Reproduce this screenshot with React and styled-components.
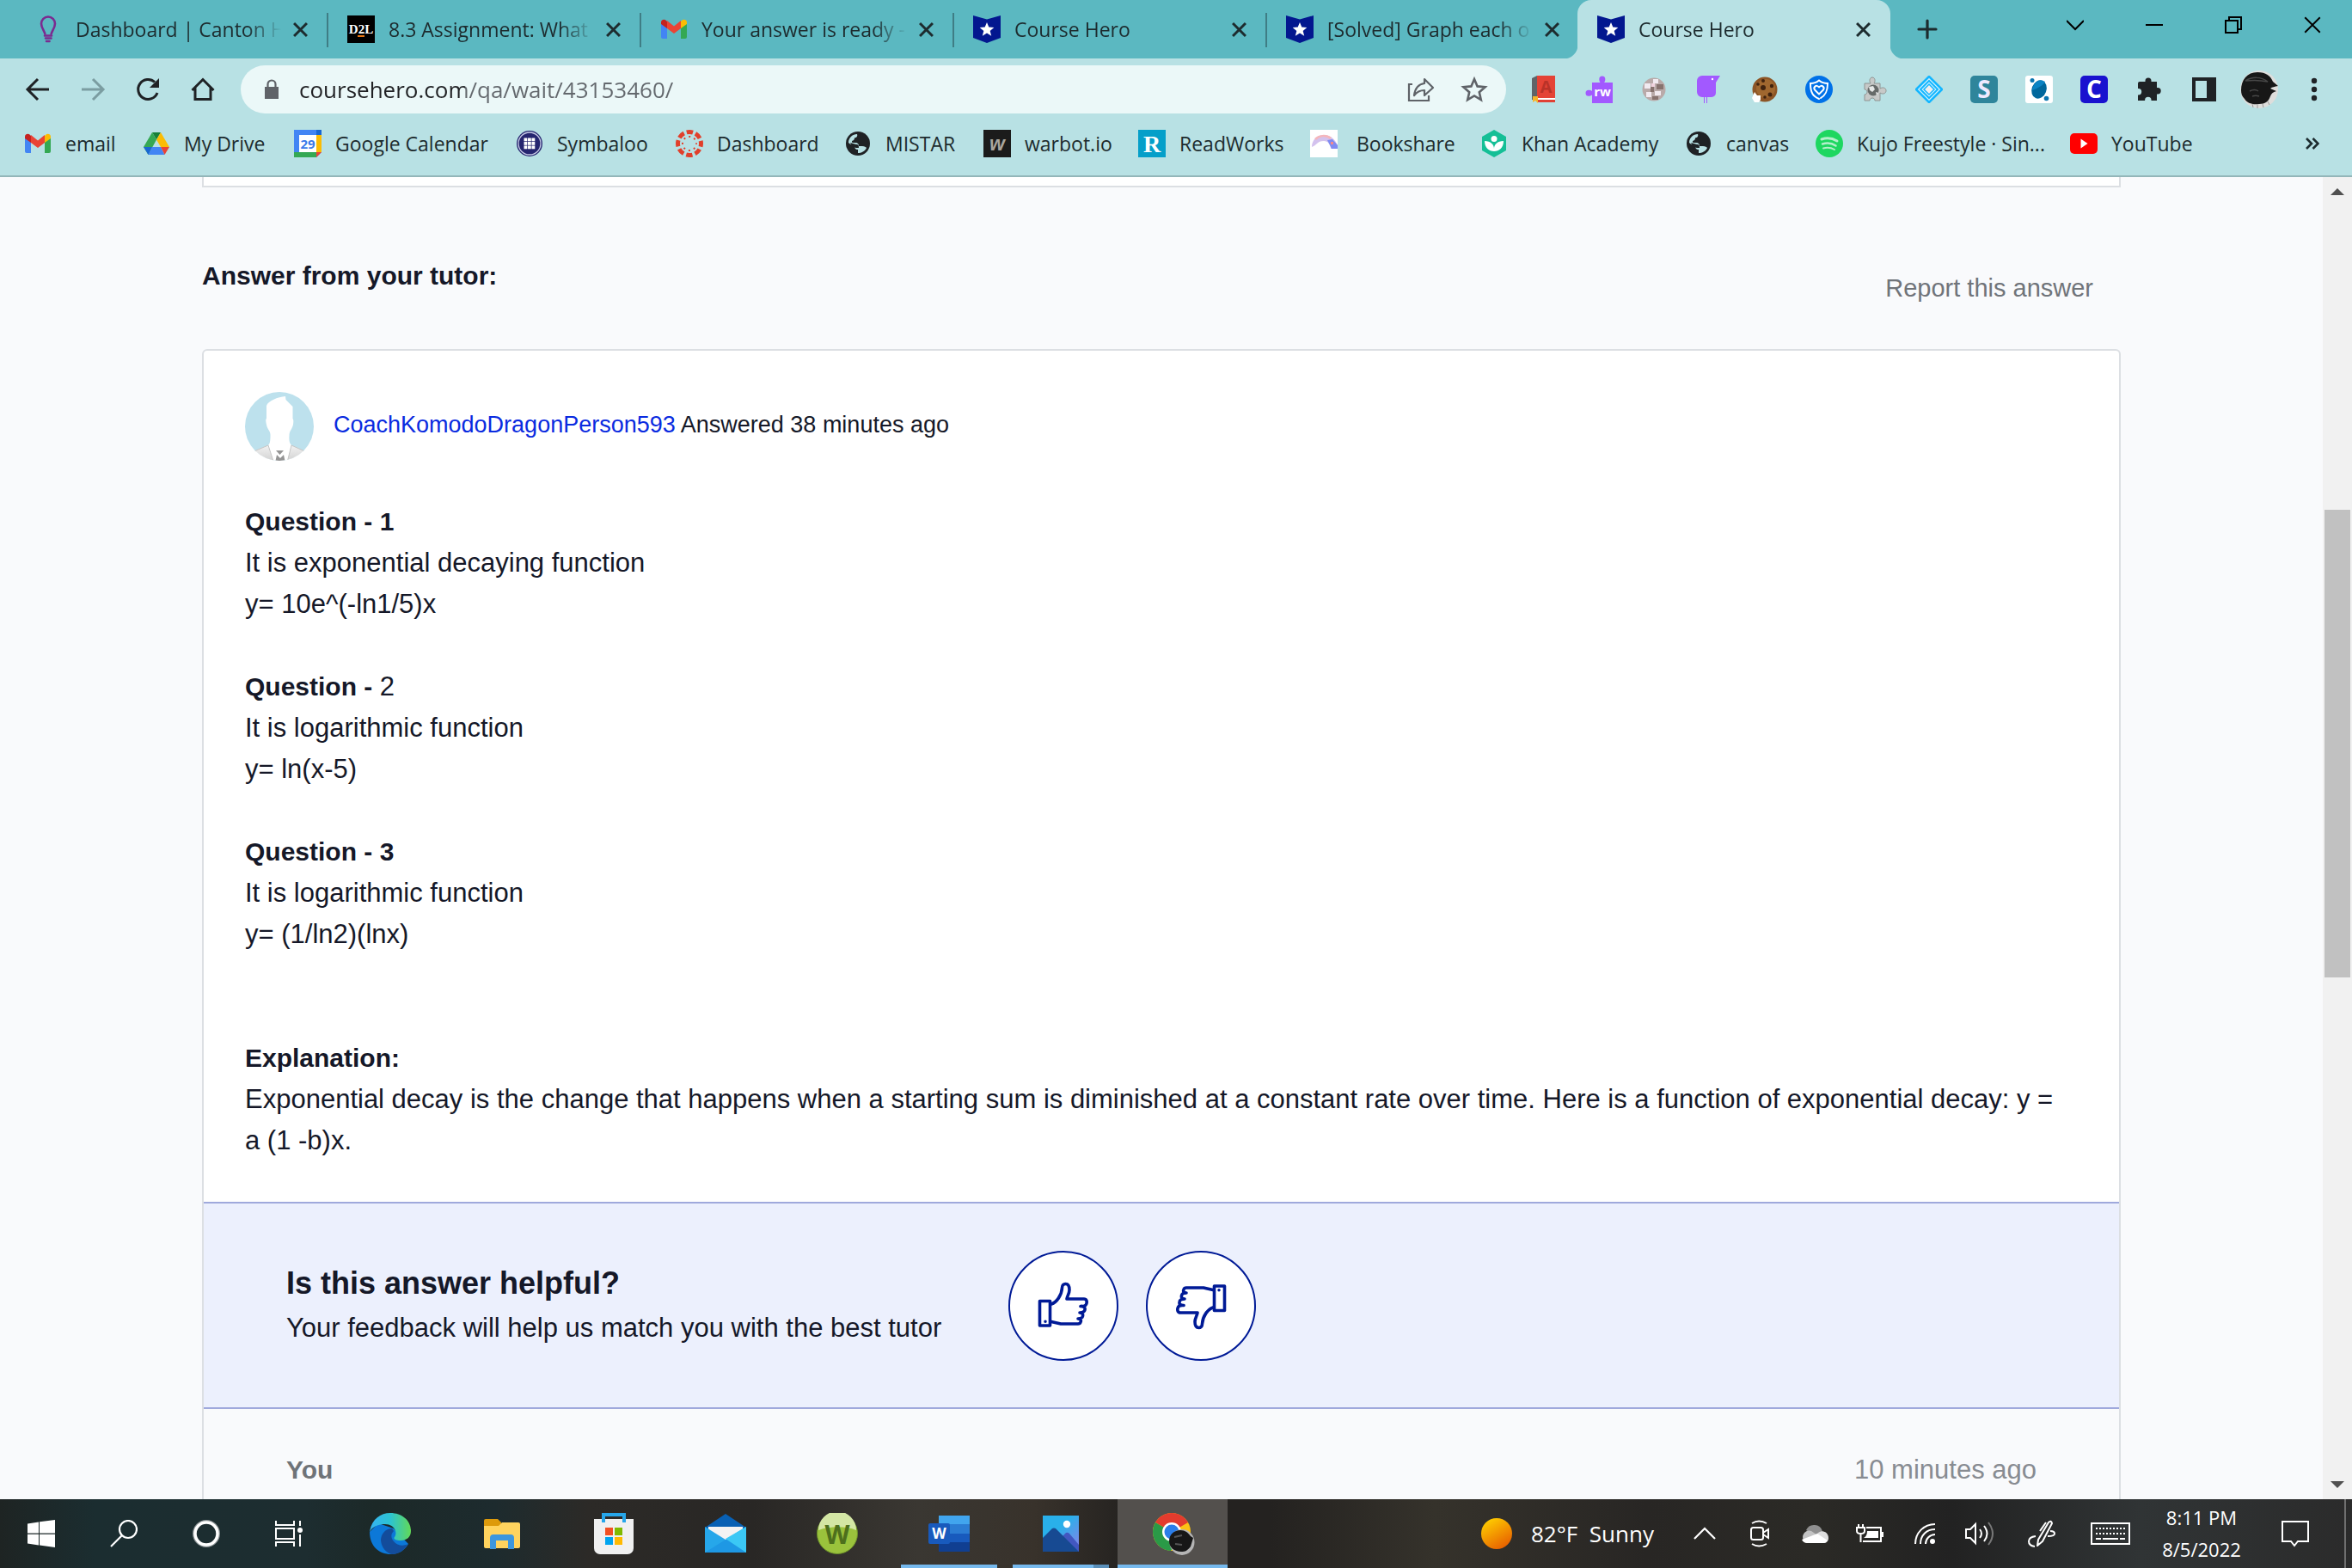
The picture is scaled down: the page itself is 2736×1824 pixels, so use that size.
import React from 'react'
import styled, { createGlobalStyle, css } from 'styled-components'

const ui = `"Open Sans","Noto Sans",sans-serif`;
const body = `"Liberation Sans",Arial,sans-serif`;

const GlobalStyle = createGlobalStyle`
*{box-sizing:border-box;}
body{margin:0;background:#f9fafc;}
button{border:none;background:none;padding:0;margin:0;font:inherit;color:inherit;cursor:pointer;}
a{color:inherit;text-decoration:none;}
svg{display:block;flex:none;}
h2,h3,p{margin:0;}
`;

const center = css`display:flex;align-items:center;justify-content:center;`;

const Screen = styled.div`display:flex;flex-direction:column;height:100vh;overflow:hidden;`;

/* browser frame */
const TabStrip = styled.header`display:flex;height:68px;padding-left:17px;background:#5bb8c1;font-family:${ui};font-size:23px;color:#1d2b2e;`;
const Tab = styled.div`
position:relative;flex:0 1 364px;min-width:0;display:flex;align-items:center;padding:0 16px 0 23px;
${({ $active }) => $active ? css`
background:#b8e1e4;border-radius:16px 16px 0 0;margin-left:-2px;
&::before,&::after{content:"";position:absolute;bottom:0;width:16px;height:16px;}
&::before{right:100%;background:radial-gradient(circle at 0 0,transparent 16px,#b8e1e4 17px);}
&::after{left:100%;background:radial-gradient(circle at 100% 0,transparent 16px,#b8e1e4 17px);}
` : css`
&::after{content:"";position:absolute;right:-1px;top:15px;width:2px;height:40px;background:${({ $last }) => $last ? 'transparent' : '#3f7d85'};}
`}
`;
const TabButton = styled.button`flex:1;min-width:0;height:40px;display:flex;align-items:center;gap:16px;text-align:left;`;
const TabLabel = styled.span`flex:1;overflow:hidden;white-space:nowrap;line-height:40px;mask-image:linear-gradient(90deg,#000 calc(100% - 44px),transparent calc(100% - 4px));`;
const TabClose = styled.button`${center}width:32px;height:32px;margin-left:2px;`;
const NewTab = styled.button`${center}width:56px;margin-left:15px;`;
const WindowControls = styled.div`display:flex;height:58px;margin-left:auto;`;
const WindowButton = styled.button`${center}width:92px;color:#000;`;

const Toolbar = styled.nav`display:flex;align-items:center;height:72px;padding:0 12px;background:#b8e1e4;color:#1f2225;`;
const ToolButton = styled.button`${center}width:64px;height:64px;flex:none;`;
const Omnibox = styled.label`flex:1;display:flex;align-items:center;height:56px;margin:0 12px;padding:0 6px 0 24px;border-radius:28px;background:#ebf8f8;color:#5f6368;`;
const Address = styled.input`
flex:1;min-width:0;margin-left:20px;padding:0;border:none;outline:none;font-family:${ui};font-size:26px;line-height:40px;
background:linear-gradient(90deg,#202124 ${({ $host }) => $host}px,#63686d ${({ $host }) => $host}px);
background-clip:text;color:transparent;
`;
const OmniButton = styled.button`${center}width:62px;height:56px;`;

const Bookmarks = styled.div`display:flex;align-items:center;height:66px;padding:0 38px 10px 28px;background:#b8e1e4;border-bottom:2px solid #93b6b9;font-family:${ui};font-size:23px;color:#1d2b2e;`;
const Bookmark = styled.a`flex:0 1 ${({ $width }) => $width}px;display:flex;align-items:center;gap:${({ $wide }) => $wide ? 22 : 16}px;white-space:nowrap;line-height:40px;`;
const More = styled.button`margin-left:auto;`;

/* page */
const Viewport = styled.div`flex:1;min-height:0;display:flex;background:#f9fafc;`;
const Page = styled.main`flex:1;min-width:0;overflow:hidden;font-family:${body};color:#151828;`;
const Column = styled.div`max-width:2232px;margin:0 auto;`;
const PreviousCard = styled.div`height:12px;border:2px solid #dcdfe3;border-top:none;background:#fff;`;
const AnswerHeader = styled.div`display:flex;justify-content:space-between;height:188px;padding-top:83px;line-height:40px;`;
const Title = styled.h2`font-size:30px;line-height:40px;`;
const Report = styled.a`margin:14px 32px 0 0;height:40px;font-size:29px;color:#70747a;`;
const Card = styled.section`border:2px solid #dcdfe3;border-radius:6px;background:#fff;`;
const Answer = styled.article`padding:48px 64px 47px 48px;`;
const Author = styled.div`display:flex;align-items:center;gap:23px;font-size:27px;`;
const AuthorText = styled.p`padding-bottom:4px;`;
const AuthorLink = styled.a`color:#0a2be0;`;
const Text = styled.div`margin-top:47px;font-size:31px;line-height:48px;`;
const Line = styled.p`min-height:48px;`;
const Strong = styled.strong`font-size:30px;`;
const Feedback = styled.div`display:flex;align-items:center;gap:32px;height:241px;padding:0 96px;background:#ecf0fd;border-top:2px solid #9fa9dc;border-bottom:2px solid #9fa9dc;`;
const FeedbackText = styled.div`min-width:808px;display:grid;gap:4px;font-size:31px;line-height:48px;`;
const FeedbackTitle = styled.h3`font-size:36px;`;
const Vote = styled.button`${center}width:128px;height:128px;border:2px solid #001a96;border-radius:50%;background:#fff;color:#001a96;
svg{transform:${({ $down }) => $down ? 'rotate(180deg)' : 'none'};}
`;
const Comment = styled.div`display:flex;justify-content:space-between;padding:47px 96px 96px;background:#f9fafc;font-size:30px;line-height:48px;color:#6f7378;`;
const When = styled.time`font-size:31px;color:#888c92;`;

const Scrollbar = styled.div`width:34px;display:flex;flex-direction:column;background:#f1f1f1;`;
const ScrollArrow = styled.button`${center}height:34px;color:#505050;`;
const Track = styled.div`flex:1;display:grid;grid-template-rows:24% 37% 1fr;`;
const Thumb = styled.div`grid-row:2;margin:0 2px;background:#c1c1c1;`;

/* taskbar */
const Taskbar = styled.footer`
display:flex;height:80px;flex:none;color:#fff;font-family:${ui};
background:linear-gradient(90deg,#1e2423 0%,#1b2d30 4%,#1d2d30 13%,#1c2928 16%,#1d2b2e 21%,#2c2a27 25%,#292725 32%,#3a3732 39%,#38322b 44%,#242220 48%,#242220 54%,#35322b 61%,#282624 70%,#2b2a26 77%,#222 83%,#303435 91%,#2b2b2b 100%);
`;
const SystemButton = styled.button`${center}width:96px;`;
const Apps = styled.div`display:flex;gap:2px;margin-left:6px;`;
const AppButton = styled.button`
${center}position:relative;width:128px;background:${({ $active }) => $active ? '#53504d' : 'none'};
&::after{content:"";position:absolute;bottom:0;height:4px;left:${({ $active }) => $active ? 0 : 8}px;right:${({ $active }) => $active ? 0 : 8}px;
background:${({ $open, $stacked }) => !$open ? 'none' : $stacked ? 'linear-gradient(90deg,#76b9ed 84%,#5a8fb9 84%)' : '#76b9ed'};}
`;
const Tray = styled.div`display:flex;align-items:center;margin-left:auto;`;
const Weather = styled.button`display:flex;align-items:center;gap:22px;height:80px;width:228px;font-size:26px;white-space:pre;`;
const TrayButton = styled.button`${center}height:80px;width:${({ $width }) => $width || 64}px;`;
const Clock = styled.button`width:104px;margin-left:14px;font-size:22px;line-height:37px;text-align:center;`;
const ShowDesktop = styled.button`width:9px;height:80px;border-left:2px solid #6f6f6f;`;

const Svg = ({ s = 32, w = s, h = s, vb = '0 0 32 32', ...rest }) => <svg width={w} height={h} viewBox={vb} fill="none" aria-hidden="true" {...rest} />;

const Bulb = () => (
    <Svg stroke="#7b2a90" strokeWidth="2.6"><path d="M12.5 22.500C12.500 18.500 8 15 8 9.500a8 8 0 0 1 16 0c0 5.500-4.500 9-4.500 13" /><path d="M12 23.500h8M13 26.500h6.500M14 30h3.500" strokeLinecap="round" /></Svg>
);
const D2L = () => (
    <Svg><rect width="32" height="32" fill="#000" /><text x="16" y="21" fontSize="15" textAnchor="middle" fill="#fff" fontFamily="Liberation Serif" fontWeight="700">D2L</text><path d="M12 24h8" stroke="#e87511" strokeWidth="2" /></Svg>
);
const Gmail = () => (
    <Svg><path d="M1 9v16a2 2 0 0 0 2 2h5V14z" fill="#4285f4" /><path d="M31 9v16a2 2 0 0 1-2 2h-5V14z" fill="#34a853" /><path d="M24 7v8l7-5V8c0-3-3.500-4-5.500-2.500z" fill="#fbbc04" /><path d="M8 15V6l8 6.500L24 6v9l-8 6z" fill="#ea4335" /><path d="M1 8v2l7 5V7L6.500 5.500C4.500 4 1 5 1 8z" fill="#c5221f" /></Svg>
);
const Hero = () => (
    <Svg><path d="M0 0l16 4.500L32 0v26l-16 6-16-6z" fill="#03178f" /><path d="M16 8l2.300 5.600 6 .4-4.600 3.900 1.500 5.900-5.200-3.200-5.200 3.200 1.500-5.900L7.700 14l6-.4z" fill="#fff" /></Svg>
);
const Drive = () => (
    <Svg><path d="M11 3h10l-5 8.500z" fill="#188038" /><path d="M11 3l5 8.500L6.500 29 1 20z" fill="#34a853" /><path d="M21 3l10 17H21L16 11.500z" fill="#fbbc04" /><path d="M1 20h10l-4.500 9z" fill="#1967d2" /><path d="M11 20h10l4.500 9h-19z" fill="#4285f4" /><path d="M21 20h10l-5.500 9z" fill="#ea4335" /></Svg>
);
const Calendar = () => (
    <Svg><path d="M0 0h32v26l-6 6H0z" fill="#4285f4" /><path d="M26 6h6v20h-6z" fill="#fbbc04" /><path d="M0 26h26v6H0z" fill="#34a853" /><path d="M26 26h6l-6 6z" fill="#ea4335" /><path d="M26 0h6v6h-6z" fill="#1967d2" /><path d="M6 6h20v20H6z" fill="#fff" /><text x="16" y="21.500" fontSize="15" fontWeight="700" fontFamily="Open Sans" textAnchor="middle" fill="#3b7bea">29</text></Svg>
);
const Symbaloo = () => (
    <Svg><circle cx="16" cy="16" r="15" fill="#25256f" /><circle cx="16" cy="16" r="13" stroke="#c8cbe6" strokeWidth="1.300" />{[9.500, 14, 18.500].map(x => [9.500, 14, 18.500].map(y => <rect key={`${x}${y}`} x={x} y={y} width="3.800" height="3.800" fill="#fff" />))}</Svg>
);
const Canvas = () => (
    <Svg><circle cx="16" cy="16" r="13.500" stroke="#e13f2b" strokeWidth="5" strokeDasharray="7.400 3.200" strokeDashoffset="3.700" /><circle cx="16" cy="16" r="8" stroke="#e13f2b" strokeWidth="2" strokeDasharray="2 4.280" strokeDashoffset="1" /></Svg>
);
const Globe = () => (
    <Svg><circle cx="16" cy="16" r="14" fill="#1f2225" /><path d="M5 15c0-6 5-10 10-10 1 3-1 4-3 4.500 0 2-1 3-3 3.500 0 2 0 2 4 2 3 0 4 2 4 4h4c3 0 4 1 5 2-2 4-6 6-10 6v-4c-3 0-4-2-4-5-3-1-5-1-7-3z" fill="#b8e1e4" /><path d="M7 15l7 2c3 0 3 2 3 4-4 0-7 0-10-6z" fill="#1f2225" /><path d="M17 4c6 1 10 6 10.500 12-2 2-5 1-7 1-2-3-5-3-5-6 2-2 4-2 3-5z" fill="#1f2225" /></Svg>
);
const Warbot = () => <Svg><rect width="32" height="32" fill="#1b1b1b" /><text x="16" y="24" textAnchor="middle" fontSize="23" fontWeight="700" fontStyle="italic" fontFamily="Liberation Sans" fill="#a9a59d">w</text></Svg>;
const ReadWorks = () => <Svg><rect width="32" height="32" fill="#059fc9" /><text x="16" y="26" textAnchor="middle" fontSize="28" fontWeight="700" fontFamily="Liberation Serif" fill="#fff">R</text></Svg>;
const Bookshare = () => <Svg><rect width="32" height="32" fill="#fff" /><path d="M2 20C2 12 8 6 16 6s13 5 16 12v4h-8c0-5-3-9-8-9-4 0-6 1-8 3-2 2-4 3-6 4z" fill="#d3c2ee" /><path d="M6 11c4-4 12-6 18-1" stroke="#f5b6bb" strokeWidth="2.500" /><path d="M20 12l6-1 6 7v4h-7z" fill="#7f8cf2" /><path d="M24 14h3v3h-3z" fill="#f58a8a" /></Svg>;
const Khan = () => <Svg><path d="M16 0l14 8v16l-14 8-14-8V8z" fill="#14bf96" /><circle cx="16" cy="10.500" r="3.500" fill="#fff" /><path d="M5 13c7 0 11 4 11 9 0-5 4-9 11-9 0 8-5 12-11 12S5 21 5 13z" fill="#fff" /></Svg>;
const Spotify = () => <Svg><circle cx="16" cy="16" r="16" fill="#1ed760" /><g stroke="#b4efcb" strokeLinecap="round"><path d="M7 11c6-2 13-1 18 2" strokeWidth="3" /><path d="M8 16.500c5-1.500 11-1 15.500 2" strokeWidth="2.500" /><path d="M9 21.500c5-1.500 9-.8 13 1.500" strokeWidth="2" /></g></Svg>;
const YouTube = () => <Svg><rect y="4" width="32" height="24" rx="5" fill="#f00" /><path d="M12.500 10.500v11l8-5.500z" fill="#fff" /></Svg>;

const Cross = ({ s = 17, sw = 2.8 }) => <Svg s={s} vb="0 0 16 16" stroke="currentColor" strokeWidth={sw}><path d="M1 1l14 14M15 1L1 15" /></Svg>;

const Dictionary = () => <Svg><path d="M8 0h21v26H8z" fill="#e44336" /><path d="M2 3l6-3v28H2z" fill="#606468" /><path d="M8 26h21v2H8z" fill="#fff" /><path d="M8 28h21v3H8z" fill="#e04034" /><path d="M3 24h6v8l-3-3-3 2z" fill="#f6b52b" /><text x="18.500" y="20" fontSize="20" fontWeight="700" textAnchor="middle" fontFamily="Open Sans" fill="#b93228">A</text></Svg>;
const ReadWrite = () => <Svg><path d="M8 8h9.500c-1-1.500-1.200-2.500-1.200-4a3.500 3.500 0 0 1 7 0c0 1.500-.2 2.500-1.200 4H32v24H8v-9.500c-1.500 1-2.500 1.200-4 1.200a3.500 3.500 0 0 1 0-7c1.500 0 2.500.2 4 1.200z" fill="#a259ff" /><text x="20" y="24" fontSize="15" fontWeight="700" textAnchor="middle" fontFamily="Open Sans" fill="#fff">rw</text></Svg>;
const Ball = () => <Svg><circle cx="16" cy="16" r="13.500" fill="#b9aaa9" /><path d="M5 9h7v6H5zM15 4h6v5h-6zM17 18h7v5h-7zM7 19h6v6H7z" fill="#f1eaf0" /><path d="M19 10h8v6h-8zM12 13h4v6h-4zM14 24h7v4h-7z" fill="#87736f" /><path d="M13 9h4v4h-4z" fill="#f0d3de" /></Svg>;
const Bird = () => <Svg><path d="M8 0h21l-5 8v12a5 5 0 0 1-5 5h-5v7h-1v-7h-2v7h-1v-7H8a6 6 0 0 1-6-6V6a6 6 0 0 1 6-6z" fill="#a259ff" /><circle cx="20" cy="4" r="1.200" fill="#fff" /></Svg>;
const Cookie = () => <Svg><circle cx="17" cy="16" r="14.500" fill="#8d5526" /><circle cx="18" cy="15" r="11" fill="#a0672f" /><g fill="#41230f"><circle cx="15" cy="14" r="3" /><circle cx="25" cy="12" r="2.200" /><circle cx="23" cy="22" r="2.500" /><circle cx="15" cy="6" r="2" /><circle cx="9" cy="10" r="1.800" /><circle cx="17" cy="25" r="1.800" /></g><path d="M5 19l3 4h4v5l-2 3H5l-3-5z" fill="#fff" /></Svg>;
const Shield = () => <Svg><circle cx="16" cy="16" r="16" fill="#0071e8" /><path d="M16 27C9 24 6 20 6 9c4 0 7-1 10-3.500C19 8 22 9 26 9c0 10-3 14-8 17" stroke="#fff" strokeWidth="2" strokeLinecap="round" /><path d="M16 21.500l-5-5c-2-3 2-7 5-3 3-4 7 0 5 3z" stroke="#fff" strokeWidth="2" strokeLinejoin="round" /></Svg>;
const GreyPuzzle = () => <Svg><path d="M5 9h7c-2-3-1-7 2-7s4 4 2 7h7v6c3-2 7-1 7 2.500S26 22 23 20v9h-6c0-4-6-4-6 0H5v-7c4 0 4-6 0-6z" fill="#c7c9c8" stroke="#8f9391" strokeWidth="1" /><circle cx="15" cy="17" r="6.500" fill="#666a69" /><path d="M10 13l5-1 2 4-3 3-3-2zM18 19l3 1-2 3z" fill="#e6e8e7" /></Svg>;
const Diamond = () => <Svg stroke="#14b6ff"><path d="M16 1l15 15-15 15L1 16z" fill="#d6f3fd" strokeWidth="2.500" strokeLinejoin="round" /><path d="M16 6l10 10-10 10L6 16z" strokeWidth="2" /><path d="M16 10l6 6-6 6-6-6z" fill="#f1eeee" strokeWidth="1.500" /></Svg>;
const Letter = ({ bg, t, color = '#fff' }) => <Svg><rect width="32" height="32" rx="5" fill={bg} /><text x="16" y="26" fontSize="28" fontWeight="700" textAnchor="middle" fontFamily="Open Sans" fill={color}>{t}</text></Svg>;
const Orbit = () => <Svg><rect width="32" height="32" rx="3" fill="#fff" /><ellipse cx="16" cy="16" rx="8.500" ry="11" fill="#00679c" transform="rotate(20 16 16)" /><path d="M9 13c3-8 10-9 14-6-2 4-9 8-15 10z" fill="#0a83c4" /><circle cx="8" cy="5.500" r="2.500" fill="#0a75b0" /><circle cx="24.500" cy="26.500" r="2.800" fill="#0a75b0" /></Svg>;
const Puzzle = () => <Svg><path d="M5 7h6.500V6a3.500 3.500 0 0 1 7 0v1H25v7h1a3.700 3.700 0 0 1 0 7.400h-1V29h-6.500v-.5a3.700 3.700 0 0 0-7.400 0v.5H3v-6.500h.5a3.700 3.700 0 0 0 0-7.400H3V9a2 2 0 0 1 2-2z" fill="#1f2225" /></Svg>;
const SidePanel = () => <Svg><path d="M2 2h28v28H2z" fill="#1f2225" /><path d="M6 6h13v20H6z" fill="#b8e1e4" /></Svg>;
const Profile = () => <Svg s={44} vb="0 0 44 44"><circle cx="22" cy="22" r="22" fill="#dededc" /><path d="M1 23C1 11 8 2 20 2c10 0 15 4 18 11l6 5c-4 1-7 1-9 3l7 3c-4 1-6 3-7 6-2 6-6 9-13 9-8 1-14-1-17-6C2 30 1 27 1 23z" fill="#171717" /><path d="M6 12c8-5 18-5 26 1-9-2-17-2-26-1zM11 24c4-2 7-2 10 0M14 30c3-1 5-1 8 0" stroke="#474747" strokeWidth="1.500" /><path d="M14 39l1 4M20 40v4M26 39l1 4M32 36l2 4" stroke="#999" /></Svg>;
const Dots = () => <Svg><circle cx="16" cy="6" r="3.200" fill="#1f2225" /><circle cx="16" cy="16" r="3.200" fill="#1f2225" /><circle cx="16" cy="26" r="3.200" fill="#1f2225" /></Svg>;

const Avatar = () => (
    <Svg s={80} vb="0 0 80 80">
        <defs>
            <clipPath id="face"><circle cx="40" cy="40" r="40" /></clipPath>
            <linearGradient id="coat" x1="0" y1="0" x2="0" y2="1"><stop stopColor="#f2f2f2" /><stop offset="1" stopColor="#cfcfcf" /></linearGradient>
        </defs>
        <g clipPath="url(#face)">
            <path fill="#bde1ed" d="M0 0h80v80H0z" />
            <path fill="#fff" d="M47 5c-9 1-20 5-22 11v15c-1 0-1 3 0 7 1 6 5 7 4.500 13 0 6-.5 9-2.500 11L12 68v12h56V68l-14-6c-2-2-3-5-2.500-11 0-6 3-7 4.500-13 .5-4 .5-6-.500-7V17l-8-8z" />
            <path fill="url(#coat)" stroke="#c4c4c4" strokeWidth="1" d="M27 62L8 70v12h25.500zM54 62l18 8v12H49z" />
            <path fill="#959595" d="M36 68h9l-4.500 5zM37 73l4 4 4-4 1.500 7h-11z" />
        </g>
    </Svg>
);
const ThumbIcon = () => (
    <Svg w={60} h={56} vb="0 0 60 56" stroke="currentColor" strokeWidth="3.600" strokeLinejoin="round" strokeLinecap="round">
        <path d="M2.500 22.500h12v28.500h-12z" /><circle cx="9" cy="46.300" r="1" fill="currentColor" strokeWidth="1.500" />
        <path d="M16 26c6-2 12-10 12.500-19 0-3 2-4.500 4-4.500 3 0 4.500 3 4.500 7 0 4-2.500 7-3 10.500h20c3 0 3.500 3 3 5-.5 3-3 4-7 3.500 4 0 5.500 1.500 5 4-.5 3-2.500 3.500-6 3.500 3 0 4 1.500 3.500 4-.5 2.500-2 3-5.500 3 3 0 4 2 3 4-.5 1.500-1.500 2-3 2H27l-11-2.500" />
    </Svg>
);

/* taskbar app icons */
const Edge = () => (
    <Svg s={48} vb="0 0 48 48">
        <defs>
            <linearGradient id="edgeTop" x1="0" x2="1"><stop stopColor="#36b3f2" /><stop offset=".5" stopColor="#2cc3d2" /><stop offset="1" stopColor="#62d957" /></linearGradient>
        </defs>
        <path d="M0 22c0 16 10 26 25 26 9 0 16-5 20-12L28 18 10 12z" fill="#0c78d8" />
        <path d="M0 22C2 8 12 0 24 0c14 0 24 9 24 21 0 7-5 11-12 11-6 0-9-2-7-4 4-6-1-15-11-15C10 13 3 16 0 22z" fill="url(#edgeTop)" />
        <path d="M26 18c-8 0-13 7-13 14 1 9 7 15 13 16 9 0 15-6 18.500-12-5 3-13 2-16.500-3-4-5-3-9 0-12z" fill="#134c9b" />
    </Svg>
);
const Folder = () => <Svg s={42} vb="0 0 42 42"><path d="M0 6a2 2 0 0 1 2-2h14l4 4v6H0z" fill="#dd9a0b" /><path d="M0 12h17l4-4h19a2 2 0 0 1 2 2v26a2 2 0 0 1-2 2H2a2 2 0 0 1-2-2z" fill="#ffd35e" /><path d="M7 39V26a4 4 0 0 1 4-4h20a4 4 0 0 1 4 4v13h-7V29H14v10z" fill="#3c96de" /></Svg>;
const Store = () => <Svg s={48} vb="0 0 48 48"><path d="M1 7h46v34a7 7 0 0 1-7 7H8a7 7 0 0 1-7-7z" fill="#f0f0f0" /><path d="M12 11V2h24v9" stroke="#26a6ea" strokeWidth="4" /><path d="M14 17h9v9h-9z" fill="#f25022" /><path d="M25 17h9v9h-9z" fill="#7fba00" /><path d="M14 28h9v9h-9z" fill="#00a4ef" /><path d="M25 28h9v9h-9z" fill="#ffb900" /></Svg>;
const Mail = () => <Svg s={48} vb="0 0 48 48"><path d="M0 17L24 1l24 16v6H0z" fill="#0860b4" /><path d="M4 16h40v20H4z" fill="#f3f3f3" /><path d="M0 16l24 15v15H0z" fill="#26a7ea" /><path d="M48 16L0 46h48z" fill="#1e98e4" /><path d="M48 16v30L24 30z" fill="#3bc8f5" /></Svg>;
const Webroot = () => <Svg s={48} vb="0 0 48 48"><circle cx="24" cy="24" r="23.500" fill="#9ac23c" stroke="#6b8f2a" /><path d="M2 20a22 22 0 0 1 44 0c-12-5-30-5-44 0z" fill="#d3e6a4" /><text x="24" y="36" fontSize="30" fontWeight="700" textAnchor="middle" fontFamily="Open Sans" fill="#4d6f1c">W</text></Svg>;
const Word = () => <Svg s={48} vb="0 0 48 48"><path d="M12 3h36v11H12z" fill="#41a5ee" /><path d="M12 13h36v11H12z" fill="#2b7cd3" /><path d="M12 24h36v10H12z" fill="#185abd" /><path d="M12 34h36v11H12z" fill="#103f91" /><rect y="12" width="25" height="24" rx="2" fill="#185abd" /><text x="12.500" y="30" fontSize="17" fontWeight="700" textAnchor="middle" fontFamily="Open Sans" fill="#fff">W</text></Svg>;
const Photos = () => <Svg s={42} vb="0 0 42 42"><defs><linearGradient id="sky" x1="0" y1="0" x2="1" y2="1"><stop offset=".4" stopColor="#29b0ea" /><stop offset="1" stopColor="#8d7fe8" /></linearGradient></defs><path d="M0 0h42v42H0z" fill="url(#sky)" /><path d="M20 27l7-7q2-1 4 1l11 13v8H26z" fill="#4257c0" /><path d="M0 26l11-11q2-1 4 0l27 27H0z" fill="#174a92" /><circle cx="28" cy="10" r="4.200" fill="#fff" /></Svg>;
const Chrome = () => (
    <Svg w={52} h={50} vb="0 0 52 50">
        <circle cx="25" cy="23" r="22" fill="#fbc116" /><path d="M25 23L6 12A22 22 0 0 1 44 12z" fill="#e33b2e" /><path d="M6 12a22 22 0 0 0 18 33l10-17-9-5z" fill="#2a9a47" />
        <circle cx="25" cy="23" r="11" fill="#fff" /><circle cx="25" cy="23" r="8.500" fill="#2b7de9" />
        <ellipse cx="37" cy="35" rx="14.500" ry="15" fill="#b5b5b5" /><path d="M22 34c0-8 6-13 13-13 6 0 9 3 12 7l3 2-3 10c-4 5-6 6-11 6-8 0-14-5-14-12z" fill="#171717" /><path d="M28 29l9-2M29 37l8 1" stroke="#555" strokeWidth="2" />
    </Svg>
);

const tabs = [
    { label: 'Dashboard | Canton Hi', icon: <Bulb /> },
    { label: '8.3 Assignment: What', icon: <D2L /> },
    { label: 'Your answer is ready -', icon: <Gmail /> },
    { label: 'Course Hero', icon: <Hero /> },
    { label: '[Solved] Graph each o', icon: <Hero />, last: true },
    { label: 'Course Hero', icon: <Hero />, active: true },
];

const bookmarks = [
    { label: 'email', icon: <Gmail />, width: 138 },
    { label: 'My Drive', icon: <Drive />, width: 176 },
    { label: 'Google Calendar', icon: <Calendar />, width: 258 },
    { label: 'Symbaloo', icon: <Symbaloo />, width: 186 },
    { label: 'Dashboard', icon: <Canvas />, width: 196 },
    { label: 'MISTAR', icon: <Globe />, width: 162 },
    { label: 'warbot.io', icon: <Warbot />, width: 180 },
    { label: 'ReadWorks', icon: <ReadWorks />, width: 200 },
    { label: 'Bookshare', icon: <Bookshare />, width: 198, wide: true },
    { label: 'Khan Academy', icon: <Khan />, width: 238 },
    { label: 'canvas', icon: <Globe />, width: 152 },
    { label: 'Kujo Freestyle · Sin...', icon: <Spotify />, width: 296 },
    { label: 'YouTube', icon: <YouTube />, width: 140 },
];

const extensions = [
    ['Dictionary', <Dictionary />], ['Read&Write', <ReadWrite />], ['Mirror ball', <Ball />], ['Bird', <Bird />], ['Cookies', <Cookie />],
    ['Shield', <Shield />], ['World puzzle', <GreyPuzzle />], ['Diamond', <Diamond />], ['S', <Letter bg="#2f859b" t="S" color="#efeaff" />], ['Orbit', <Orbit />],
    ['C', <Letter bg="#1a12cf" t="C" />], ['Extensions', <Puzzle />], ['Side panel', <SidePanel />], ['Profile', <Profile />], ['Menu', <Dots />],
];

const apps = [
    { name: 'Edge', icon: <Edge /> },
    { name: 'File Explorer', icon: <Folder /> },
    { name: 'Microsoft Store', icon: <Store /> },
    { name: 'Mail', icon: <Mail /> },
    { name: 'Webroot', icon: <Webroot /> },
    { name: 'Word', icon: <Word />, open: true },
    { name: 'Photos', icon: <Photos />, open: true, stacked: true },
    { name: 'Chrome', icon: <Chrome />, open: true, active: true },
];

const BrowserFrame = () => (
    <>
        <TabStrip>
            {tabs.map((tab, i) => (
                <Tab key={i} $active={tab.active} $last={tab.last}>
                    <TabButton>{tab.icon}<TabLabel>{tab.label}</TabLabel></TabButton>
                    <TabClose aria-label="Close tab"><Cross /></TabClose>
                </Tab>
            ))}
            <NewTab aria-label="New tab"><Svg s={24} vb="0 0 24 24" stroke="currentColor" strokeWidth="3.200" strokeLinecap="round"><path d="M12 2v20M2 12h20" /></Svg></NewTab>
            <WindowControls>
                <WindowButton aria-label="Search tabs"><Svg s={20} vb="0 0 20 20" stroke="currentColor" strokeWidth="2"><path d="M0 5l10 10L20 5" /></Svg></WindowButton>
                <WindowButton aria-label="Minimize"><Svg s={20} vb="0 0 20 20" stroke="currentColor" strokeWidth="2"><path d="M0 10h20" /></Svg></WindowButton>
                <WindowButton aria-label="Restore"><Svg s={20} vb="0 0 20 20" stroke="currentColor" strokeWidth="2"><path d="M1 5h14v14H1zM5 5V1h14v14h-4" /></Svg></WindowButton>
                <WindowButton aria-label="Close"><Cross s={20} sw={1.5} /></WindowButton>
            </WindowControls>
        </TabStrip>
        <Toolbar>
            <ToolButton aria-label="Back"><Svg stroke="currentColor" strokeWidth="3"><path d="M29 16H4M16 4L4 16l12 12" /></Svg></ToolButton>
            <ToolButton aria-label="Forward"><Svg stroke="#7b9da1" strokeWidth="3"><path d="M3 16h25M16 4l12 12-12 12" /></Svg></ToolButton>
            <ToolButton aria-label="Reload"><Svg stroke="currentColor" strokeWidth="3"><path d="M27 20a11.500 11.500 0 1 1-3-12.500" /><path d="M29 3v11H18z" fill="currentColor" stroke="none" /></Svg></ToolButton>
            <ToolButton aria-label="Home"><Svg stroke="currentColor" strokeWidth="3"><path d="M3.500 17L16 4.500 28.500 17M7 14v13.500h18V14" /></Svg></ToolButton>
            <Omnibox>
                <Svg w={24} h={24} vb="0 0 24 24"><path d="M4 9h16v14H4z" fill="#5f6368" /><path d="M7.500 10V6a4.500 4.500 0 0 1 9 0v4" stroke="#5f6368" strokeWidth="2.200" /></Svg>
                <Address type="text" aria-label="Address" $host={193} defaultValue="coursehero.com/qa/wait/43153460/" />
                <OmniButton aria-label="Share"><Svg stroke="currentColor" strokeWidth="2.200"><path d="M6 10H2v19h23v-6" /><path d="M20 4l10 10-10 9v-6c-6 0-9 2-12 6 1-8 5-13 12-14z" strokeLinejoin="round" /></Svg></OmniButton>
                <OmniButton aria-label="Bookmark"><Svg stroke="currentColor" strokeWidth="2.600"><path d="M16 4l3.600 8.400 9 .8-6.800 6 2 8.900L16 23.400 8.200 28.100l2-8.900-6.800-6 9-.8z" /></Svg></OmniButton>
            </Omnibox>
            {extensions.map(([name, icon]) => <ToolButton key={name} aria-label={name}>{icon}</ToolButton>)}
        </Toolbar>
        <Bookmarks>
            {bookmarks.map((b, i) => <Bookmark key={i} href="#" $width={b.width} $wide={b.wide}>{b.icon}<span>{b.label}</span></Bookmark>)}
            <More aria-label="More bookmarks"><Svg w={16} h={14} vb="0 0 16 14" stroke="currentColor" strokeWidth="2.600"><path d="M1 1l6 6-6 6M8.500 1l6 6-6 6" /></Svg></More>
        </Bookmarks>
    </>
)

const AnswerPage = () => (
    <Page>
        <Column>
            <PreviousCard />
            <AnswerHeader>
                <Title>Answer from your tutor:</Title>
                <Report href="#">Report this answer</Report>
            </AnswerHeader>
            <Card>
                <Answer>
                    <Author>
                        <Avatar />
                        <AuthorText><AuthorLink href="#">CoachKomodoDragonPerson593</AuthorLink> Answered 38 minutes ago</AuthorText>
                    </Author>
                    <Text>
                        <Line><Strong>Question - 1</Strong></Line>
                        <Line>It is exponential decaying function</Line>
                        <Line>y= 10e^(-ln1/5)x</Line>
                        <Line />
                        <Line><Strong>Question - </Strong>2</Line>
                        <Line>It is logarithmic function</Line>
                        <Line>y= ln(x-5)</Line>
                        <Line />
                        <Line><Strong>Question - 3</Strong></Line>
                        <Line>It is logarithmic function</Line>
                        <Line>y= (1/ln2)(lnx)</Line>
                        <Line />
                        <Line />
                        <Line><Strong>Explanation:</Strong></Line>
                        <Line>Exponential decay is the change that happens when a starting sum is diminished at a constant rate over time. Here is a function of exponential decay: y = a (1 -b)x.</Line>
                    </Text>
                </Answer>
                <Feedback>
                    <FeedbackText>
                        <FeedbackTitle>Is this answer helpful?</FeedbackTitle>
                        <p>Your feedback will help us match you with the best tutor</p>
                    </FeedbackText>
                    <Vote aria-label="Helpful"><ThumbIcon /></Vote>
                    <Vote aria-label="Not helpful" $down><ThumbIcon /></Vote>
                </Feedback>
                <Comment>
                    <strong>You</strong>
                    <When>10 minutes ago</When>
                </Comment>
            </Card>
        </Column>
    </Page>
)

const SystemTaskbar = () => (
    <Taskbar>
        <SystemButton aria-label="Start"><Svg><path fill="#fff" d="M0 4.500l13-2v13H0zM14 2.300L32 0v15.500H14zM0 16.700h13v12.800l-13-2zM14 16.700h18V32l-18-2.500z" /></Svg></SystemButton>
        <SystemButton aria-label="Search"><Svg stroke="#fff" strokeWidth="2.200"><circle cx="21" cy="11" r="10" /><path d="M14 18L1 31" /></Svg></SystemButton>
        <SystemButton aria-label="Cortana"><Svg><circle cx="16" cy="16" r="14" stroke="#8b9395" strokeWidth="4" /><circle cx="16" cy="16" r="13" stroke="#fff" strokeWidth="3.500" /></Svg></SystemButton>
        <SystemButton aria-label="Task view"><Svg stroke="#fff" strokeWidth="2"><path d="M1 1v5h21V1M1 31v-5h21v5M1 10h21v12H1zM29 1v6M29 17v14" /><circle cx="29" cy="12" r="3" fill="#fff" stroke="none" /></Svg></SystemButton>
        <Apps>
            {apps.map(a => <AppButton key={a.name} aria-label={a.name} $open={a.open} $stacked={a.stacked} $active={a.active}>{a.icon}</AppButton>)}
        </Apps>
        <Tray>
            <Weather>
                <Svg s={36} vb="0 0 36 36"><defs><linearGradient id="sun" x1=".2" y1="0" x2=".8" y2="1"><stop stopColor="#ffd000" /><stop offset="1" stopColor="#e65a00" /></linearGradient></defs><circle cx="18" cy="18" r="18" fill="url(#sun)" /></Svg>
                <span>{'82°F  Sunny'}</span>
            </Weather>
            <TrayButton aria-label="Hidden icons"><Svg s={26} vb="0 0 26 26" stroke="#fff" strokeWidth="2.200"><path d="M1 19L13 7l12 12" /></Svg></TrayButton>
            <TrayButton aria-label="Meet now"><Svg w={24} h={32} vb="0 0 24 32" stroke="#fff" strokeWidth="2"><rect x="2" y="9" width="14" height="14" rx="2.500" /><path d="M16 15l6-4v10l-6-4M3 4q8-5 17 0M3 28q8 5 17 0" /></Svg></TrayButton>
            <TrayButton aria-label="OneDrive"><Svg w={32} h={24} vb="0 0 32 24"><path d="M6 8a10 10 0 0 1 19 2l-6 6z" fill="#8f8f8f" /><path d="M7 23a7 7 0 1 1 5-14l12 8v6z" fill="#c3c3c3" /><path d="M19 12c6-6 13-1 13 5 0 4-3 6-5 6H14z" fill="#dedede" /><path d="M1 19l18-7 12 8q-2 3-5 3H7q-4 0-6-4z" fill="#fff" /></Svg></TrayButton>
            <TrayButton aria-label="Battery"><Svg w={32} h={24} vb="0 0 32 24" stroke="#fff" strokeWidth="2"><path d="M12 5h17v16H8M31 10v6M3 1v4M8 1v4M1 5h9v4q0 3-4.500 3T1 9zM5.500 12v10" /><path d="M13 9h13v8H9q4-2 4-8z" fill="#fff" stroke="none" /></Svg></TrayButton>
            <TrayButton aria-label="Network"><Svg s={26} vb="0 0 26 26" stroke="#fff" strokeWidth="2"><path d="M2 25C2 12 12 2 25 2M8 25C8 15 15 8 25 8M14 25c0-6 5-11 11-11" /><circle cx="22" cy="22" r="3" fill="#fff" stroke="none" /></Svg></TrayButton>
            <TrayButton aria-label="Volume"><Svg w={34} h={30} vb="0 0 34 30" stroke="#fff" strokeWidth="2"><path d="M1 10v10h5l6 6V4l-6 6zM17 10q4 5 0 10M22 6q7 9 0 18" /><path d="M27 2q10 13 0 26" stroke="#777" /></Svg></TrayButton>
            <TrayButton $width={80} aria-label="Pen"><Svg stroke="#fff" strokeWidth="2"><path d="M11 30l1-7L24 3q3-3 4 1L17 25zM14 13l7-10M9 19q-8 1-8 6t7 6M26 13q5 0 5 3t-8 3" strokeLinejoin="round" /></Svg></TrayButton>
            <TrayButton $width={80} aria-label="Keyboard"><Svg w={46} h={26} vb="0 0 46 26" stroke="#fff" strokeWidth="2"><path d="M1 1h44v24H1z" /><path d="M6 7h34M6 13h34" strokeDasharray="2 2" /><path d="M6 19h6M14 19h18M34 19h6" /></Svg></TrayButton>
            <Clock>8:11 PM<br />8/5/2022</Clock>
            <TrayButton $width={114} aria-label="Notifications"><Svg s={32} stroke="#fff" strokeWidth="2"><path d="M1 2h30v23H19l-4 5-4-5H1z" /></Svg></TrayButton>
            <ShowDesktop aria-label="Show desktop" />
        </Tray>
    </Taskbar>
)

const App = () => {
    return (
        <Screen>
            <GlobalStyle />
            <BrowserFrame />
            <Viewport>
                <AnswerPage />
                <Scrollbar>
                    <ScrollArrow aria-label="Scroll up"><Svg w={16} h={8} vb="0 0 16 8"><path d="M0 8l8-8 8 8z" fill="currentColor" /></Svg></ScrollArrow>
                    <Track><Thumb /></Track>
                    <ScrollArrow aria-label="Scroll down"><Svg w={16} h={8} vb="0 0 16 8"><path d="M0 0l8 8 8-8z" fill="currentColor" /></Svg></ScrollArrow>
                </Scrollbar>
            </Viewport>
            <SystemTaskbar />
        </Screen>
    )
}

export default App
